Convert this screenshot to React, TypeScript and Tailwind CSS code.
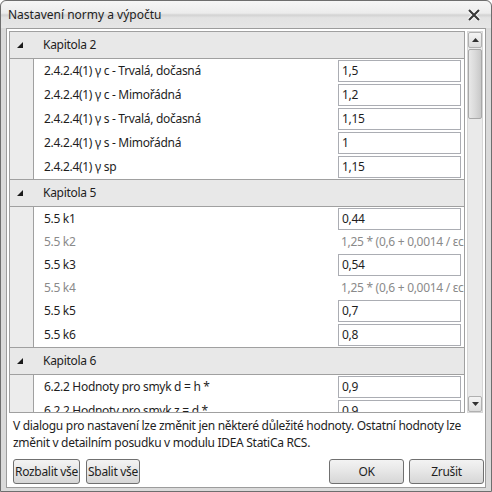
import React from "react";

type Row = { label: string; value?: string; formula?: string };
type Section = { title: string; rows: Row[] };

const sections: Section[] = [
  {
    title: "Kapitola 2",
    rows: [
      { label: "2.4.2.4(1) γ c - Trvalá, dočasná", value: "1,5" },
      { label: "2.4.2.4(1) γ c - Mimořádná", value: "1,2" },
      { label: "2.4.2.4(1) γ s - Trvalá, dočasná", value: "1,15" },
      { label: "2.4.2.4(1) γ s - Mimořádná", value: "1" },
      { label: "2.4.2.4(1) γ sp", value: "1,15" },
    ],
  },
  {
    title: "Kapitola 5",
    rows: [
      { label: "5.5 k1", value: "0,44" },
      { label: "5.5 k2", formula: "1,25 * (0,6 + 0,0014 / εcu2)" },
      { label: "5.5 k3", value: "0,54" },
      { label: "5.5 k4", formula: "1,25 * (0,6 + 0,0014 / εcu2)" },
      { label: "5.5 k5", value: "0,7" },
      { label: "5.5 k6", value: "0,8" },
    ],
  },
  {
    title: "Kapitola 6",
    rows: [
      { label: "6.2.2 Hodnoty pro smyk d = h *", value: "0,9" },
      { label: "6.2.2 Hodnoty pro smyk z = d *", value: "0,9" },
      { label: "6.2.3 cot θ", value: "2,5" },
    ],
  },
];

const font = { fontFamily: '"Noto Sans", "Open Sans", sans-serif' };

const SectionHeader = ({ title }: { title: string }) => (
  <div className="flex items-center h-[28px] bg-[#e8e8e8] border-y border-[#a0a0a0] shrink-0">
    <svg width="6" height="6" viewBox="0 0 6 6" className="ml-[7px]">
      <polygon points="6,0 6,6 0,6" fill="#1a1a1a" />
    </svg>
    <span className="ml-[20px] text-[12px] tracking-[-0.3px] text-[#1e1e1e]">{title}</span>
  </div>
);

const RowItem = ({ row }: { row: Row }) => (
  <div className={`flex ${row.formula ? "h-[22px]" : "h-[24px]"} shrink-0`}>
    <div className="w-[24px] bg-[#ececec] border-r border-[#a0a0a0] shrink-0" />
    <div
      className={`flex-1 flex items-center pl-[10px] text-[12px] tracking-[-0.3px] whitespace-nowrap ${
        row.formula ? "text-[#8a8a8a]" : "text-[#1e1e1e]"
      }`}
    >
      {row.label}
    </div>
    <div className="w-[126px] pr-[3px] flex items-center shrink-0 overflow-hidden">
      {row.formula ? (
        <span className="pl-[3px] text-[12px] tracking-[-0.3px] text-[#8a8a8a] whitespace-nowrap">{row.formula}</span>
      ) : (
        <div className="w-full h-[22px] border border-[#abadb3] bg-white flex items-center pl-[3px] text-[12px] tracking-[-0.3px] text-[#1e1e1e]">
          {row.value}
        </div>
      )}
    </div>
  </div>
);

const Button = ({ label, className }: { label: string; className: string }) => (
  <button
    className={`h-[25px] border border-[#707070] rounded-[3px] bg-gradient-to-b from-[#f3f3f3] via-[#e6e6e6] to-[#d6d6d6] text-[12px] tracking-[-0.3px] text-[#1e1e1e] ${className}`}
  >
    {label}
  </button>
);

export default function App() {
  return (
    <div className="w-[492px] h-[492px] bg-white" style={font}>
      <div className="w-full h-full flex flex-col border border-[#6e6e6e] rounded-t-[6px] bg-[#dadada]">
        <div className="h-[27px] flex items-center justify-between shrink-0 rounded-t-[6px] bg-[linear-gradient(to_bottom,#f6f6f6_0%,#ececec_45%,#d2d2d2_52%,#e2e2e2_62%,#e6e6e6_100%)]">
          <span className="ml-[7px] text-[12px] text-[#222]">Nastavení normy a výpočtu</span>
          <svg width="14" height="12" viewBox="0 0 14 12" className="mr-[10px]">
            <path d="M2 1 L12 11 M12 1 L2 11" stroke="#ffffff" strokeWidth="4" />
            <path d="M2 1 L12 11 M12 1 L2 11" stroke="#3a3a3a" strokeWidth="2.2" />
          </svg>
        </div>
        <div className="flex-1 mx-[5px] mb-[3px] border border-[#9c9c9c] bg-white flex flex-col">
          <div className="flex mt-[2px] ml-[2px] mr-[2px] h-[382px]">
            <div className="w-[457px] h-full border-x border-b border-[#a0a0a0] overflow-hidden flex flex-col">
              {sections.map((s) => (
                <React.Fragment key={s.title}>
                  <SectionHeader title={s.title} />
                  {s.rows.map((r) => (
                    <RowItem key={r.label} row={r} />
                  ))}
                </React.Fragment>
              ))}
            </div>
            <div className="w-[16px] ml-[2px] h-full bg-[#eaeaea] border border-[#d6d6d6] flex flex-col">
              <div className="h-[16px] border border-[#b0b0b0] rounded-[2px] bg-gradient-to-b from-[#f4f4f4] to-[#dcdcdc] flex items-center justify-center">
                <svg width="7" height="4" viewBox="0 0 7 4">
                  <polygon points="0,4 7,4 3.5,0" fill="#303030" />
                </svg>
              </div>
              <div className="h-[70px] mt-[1px] border border-[#a8a8a8] rounded-[2px] bg-gradient-to-r from-[#e8e8e8] via-[#dadada] to-[#c8c8c8]" />
              <div className="flex-1" />
              <div className="h-[16px] border border-[#b0b0b0] rounded-[2px] bg-gradient-to-b from-[#f4f4f4] to-[#dcdcdc] flex items-center justify-center">
                <svg width="7" height="4" viewBox="0 0 7 4">
                  <polygon points="0,0 7,0 3.5,4" fill="#303030" />
                </svg>
              </div>
            </div>
          </div>
          <p className="mt-[4px] pl-[6px] pr-[4px] text-[12px] tracking-[-0.3px] leading-[17px] text-[#1e1e1e]">
            V dialogu pro nastavení lze změnit jen některé důležité hodnoty. Ostatní hodnoty lze změnit v detailním
            posudku v modulu IDEA StatiCa RCS.
          </p>
          <div className="flex mt-auto mb-[3px] pl-[6px] pr-[1px]">
            <Button label="Rozbalit vše" className="px-[1px]" />
            <Button label="Sbalit vše" className="ml-[6px] px-[1px]" />
            <div className="flex-1" />
            <Button label="OK" className="w-[75px]" />
            <Button label="Zrušit" className="ml-[5px] w-[75px]" />
          </div>
        </div>
      </div>
    </div>
  );
}
